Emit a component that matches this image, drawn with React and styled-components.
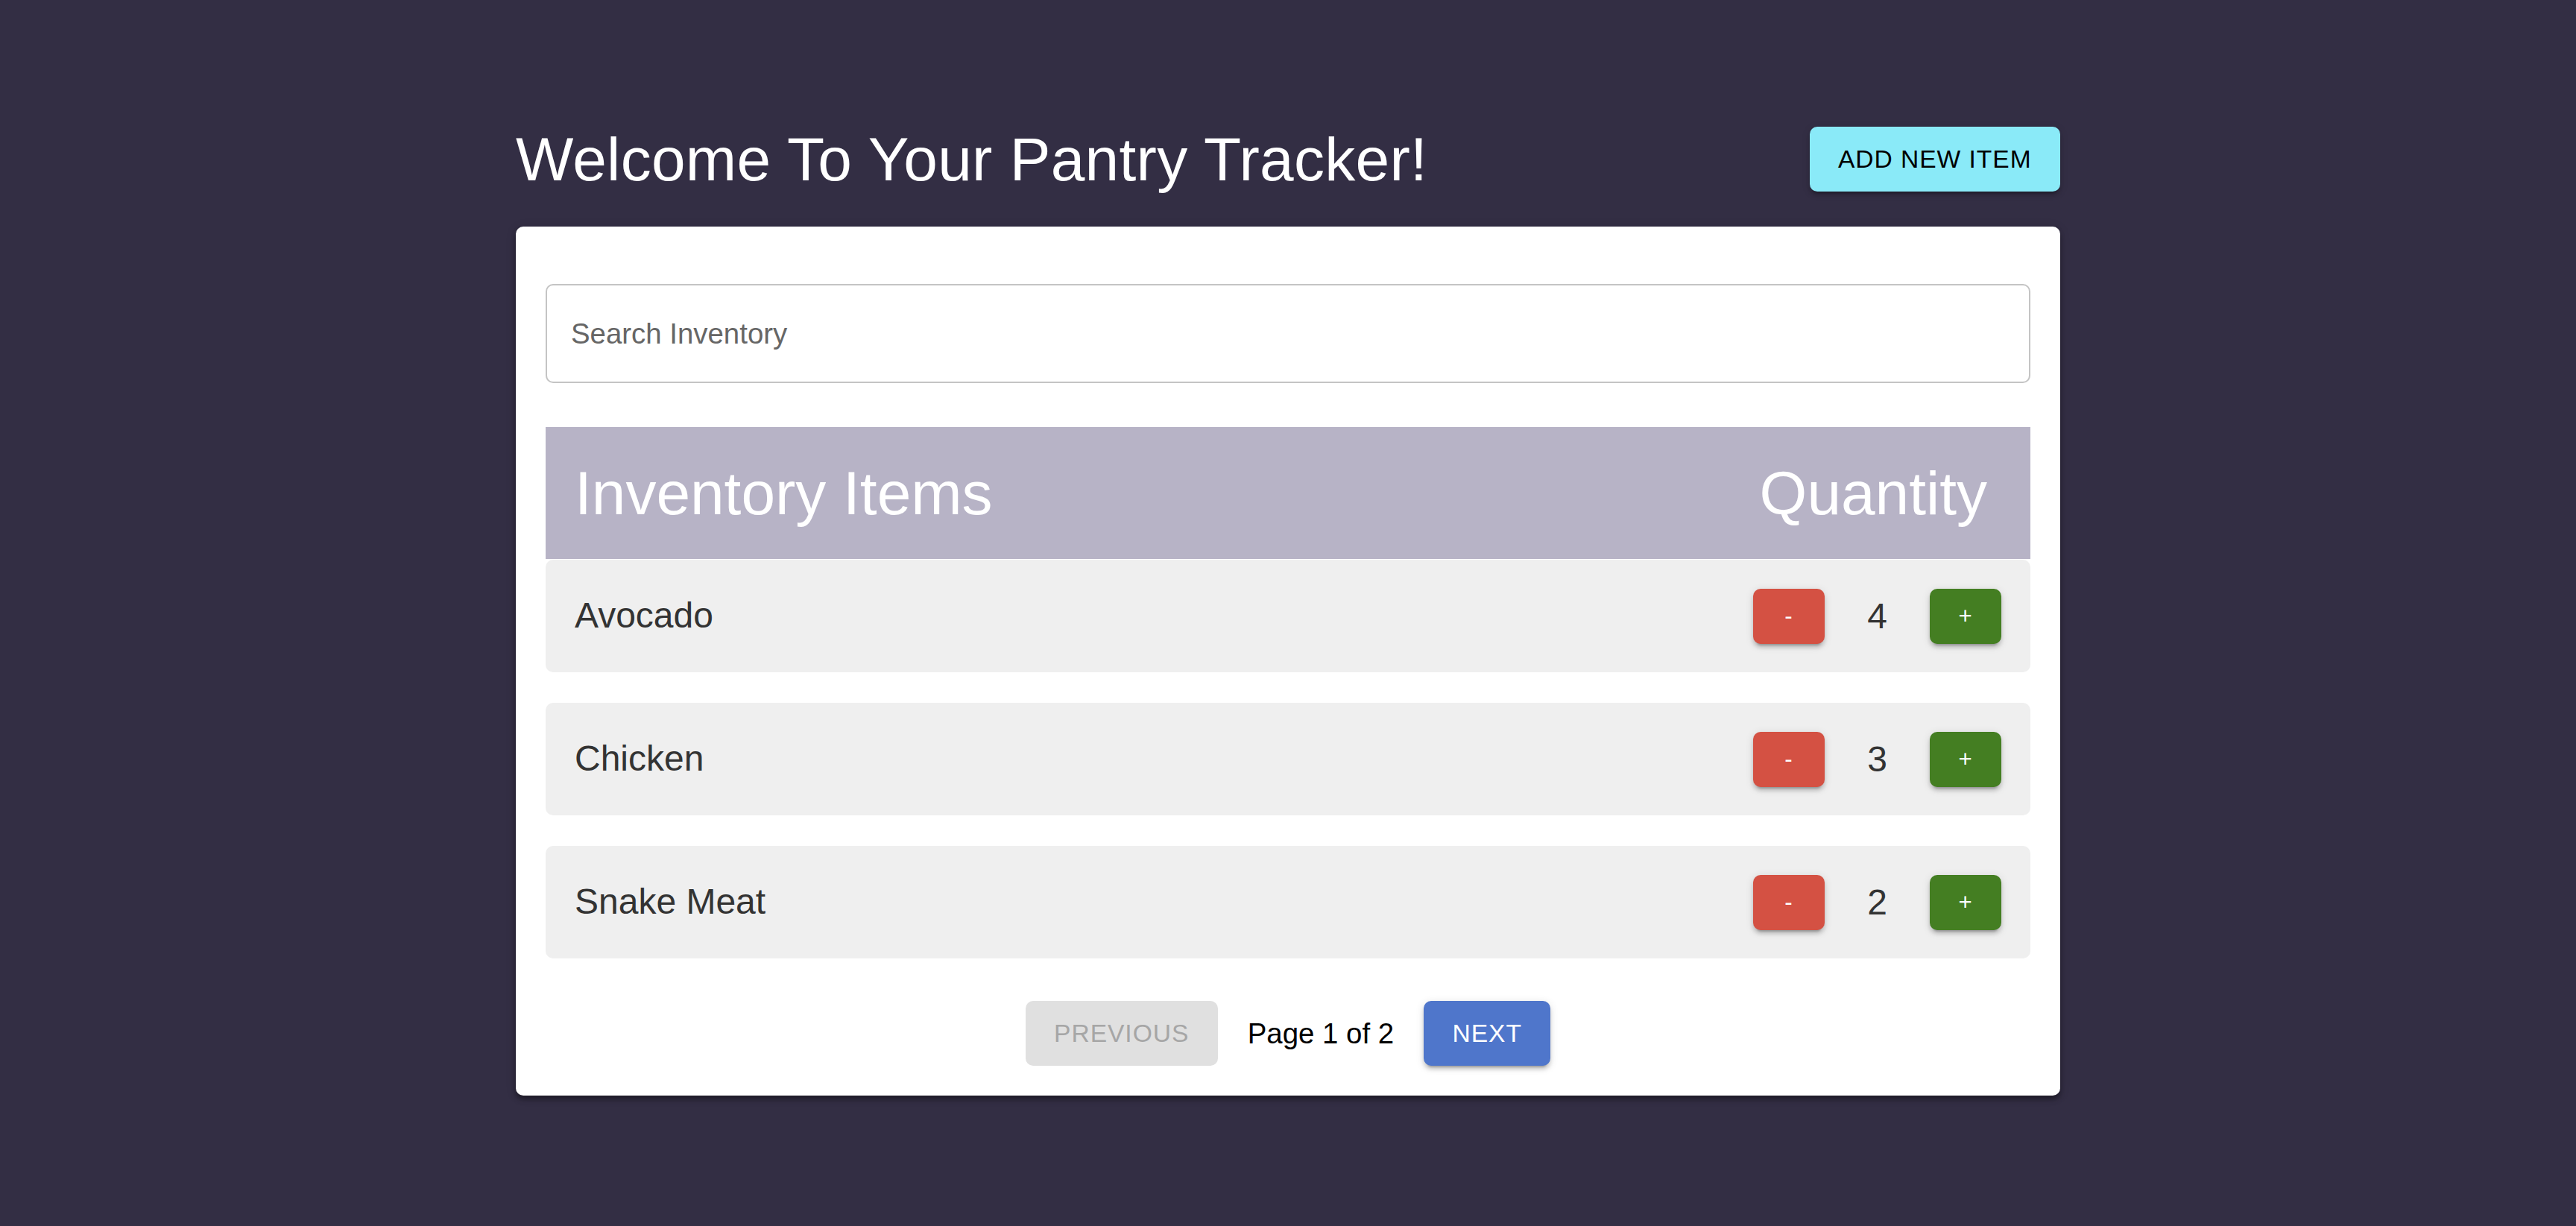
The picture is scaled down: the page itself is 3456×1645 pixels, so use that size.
import React from "react";
import styled, { createGlobalStyle } from "styled-components";

const GlobalStyle = createGlobalStyle`
  html, body {
    margin: 0;
    padding: 0;
    background: #332e44;
    font-family: "Liberation Sans", Arial, Helvetica, sans-serif;
  }
  #root {
    min-height: 100vh;
  }
`;

const Page = styled.div`
  min-height: 100vh;
  background: #332e44;
  display: flex;
  justify-content: center;
  box-sizing: border-box;
  padding-top: 163px;
`;

const Container = styled.div`
  width: 2072px;
  display: flex;
  flex-direction: column;
`;

const TitleRow = styled.div`
  display: flex;
  justify-content: space-between;
  align-items: center;
  margin-bottom: 40px;
`;

const Title = styled.h1`
  margin: 0;
  font-size: 82px;
  line-height: 1.235;
  font-weight: 400;
  color: #ffffff;
  letter-spacing: 0.3px;
`;

const Button = styled.button`
  font-family: "Liberation Sans", Arial, Helvetica, sans-serif;
  font-size: ${(p) => (p.$small ? "31.2px" : "33.6px")};
  font-weight: 400;
  letter-spacing: 0.96px;
  text-transform: uppercase;
  border: none;
  border-radius: 10px;
  cursor: pointer;
  height: ${(p) => (p.$small ? "74px" : "87px")};
  min-width: ${(p) => (p.$small ? "96px" : "154px")};
  padding: ${(p) => (p.$small ? "0 24px" : "0 38.4px")};
  background: ${(p) => p.$bg};
  color: ${(p) => p.$fg};
  box-shadow: ${(p) =>
    p.$flat
      ? "none"
      : "0 7px 2.4px -5px rgba(0,0,0,0.2), 0 5px 5px 0 rgba(0,0,0,0.14), 0 2.4px 12px 0 rgba(0,0,0,0.12)"};
  display: inline-flex;
  align-items: center;
  justify-content: center;
  line-height: 1;
`;

const Card = styled.div`
  background: #ffffff;
  border-radius: 10px;
  padding: 77px 40px 40px;
  box-shadow: 0 5px 6px rgba(0, 0, 0, 0.35), 0 2px 14px rgba(0, 0, 0, 0.15);
  display: flex;
  flex-direction: column;
`;

const SearchInput = styled.input`
  box-sizing: border-box;
  width: 100%;
  height: 133px;
  border: 2px solid #c4c4c4;
  border-radius: 10px;
  padding: 0 32px;
  font-family: "Liberation Sans", Arial, Helvetica, sans-serif;
  font-size: 38.4px;
  color: #333;
  outline: none;
  &::placeholder {
    color: #666666;
  }
`;

const HeaderBar = styled.div`
  margin-top: 59px;
  height: 177px;
  background: #b7b3c6;
  display: flex;
  align-items: center;
  justify-content: space-between;
  padding: 0 58px 0 39px;
`;

const HeaderText = styled.h2`
  margin: 0;
  font-size: 82px;
  line-height: 1.235;
  font-weight: 400;
  color: #ffffff;
`;

const List = styled.div`
  display: flex;
  flex-direction: column;
  gap: 41px;
  margin-top: 1px;
`;

const Row = styled.div`
  height: 151px;
  background: #efefef;
  border-radius: 10px;
  display: flex;
  align-items: center;
  justify-content: space-between;
  padding: 0 39px;
`;

const ItemName = styled.span`
  font-size: 48px;
  color: #333333;
  line-height: 1.6;
`;

const Controls = styled.div`
  display: flex;
  align-items: center;
`;

const Qty = styled.span`
  font-size: 48px;
  color: #333333;
  margin: 0 57px;
  min-width: 27px;
  text-align: center;
`;

const Pagination = styled.div`
  margin-top: 57px;
  display: flex;
  justify-content: center;
  align-items: center;
  gap: 40px;
`;

const PageText = styled.span`
  font-size: 38.4px;
  color: #000000;
`;

const items = [
  { name: "Avocado", qty: 4 },
  { name: "Chicken", qty: 3 },
  { name: "Snake Meat", qty: 2 },
];

export default function App() {
  return (
    <>
      <GlobalStyle />
      <Page>
        <Container>
          <TitleRow>
            <Title>Welcome To Your Pantry Tracker!</Title>
            <Button $bg="#8aeaf8" $fg="#000000">Add New Item</Button>
          </TitleRow>
          <Card>
            <SearchInput placeholder="Search Inventory" />
            <HeaderBar>
              <HeaderText>Inventory Items</HeaderText>
              <HeaderText>Quantity</HeaderText>
            </HeaderBar>
            <List>
              {items.map((it) => (
                <Row key={it.name}>
                  <ItemName>{it.name}</ItemName>
                  <Controls>
                    <Button $small $bg="#d45143" $fg="#ffffff">-</Button>
                    <Qty>{it.qty}</Qty>
                    <Button $small $bg="#447e22" $fg="#ffffff">+</Button>
                  </Controls>
                </Row>
              ))}
            </List>
            <Pagination>
              <Button $flat $bg="#e0e0e0" $fg="#a6a6a6" disabled>Previous</Button>
              <PageText>Page 1 of 2</PageText>
              <Button $bg="#4f76cb" $fg="#ffffff">Next</Button>
            </Pagination>
          </Card>
        </Container>
      </Page>
    </>
  );
}
